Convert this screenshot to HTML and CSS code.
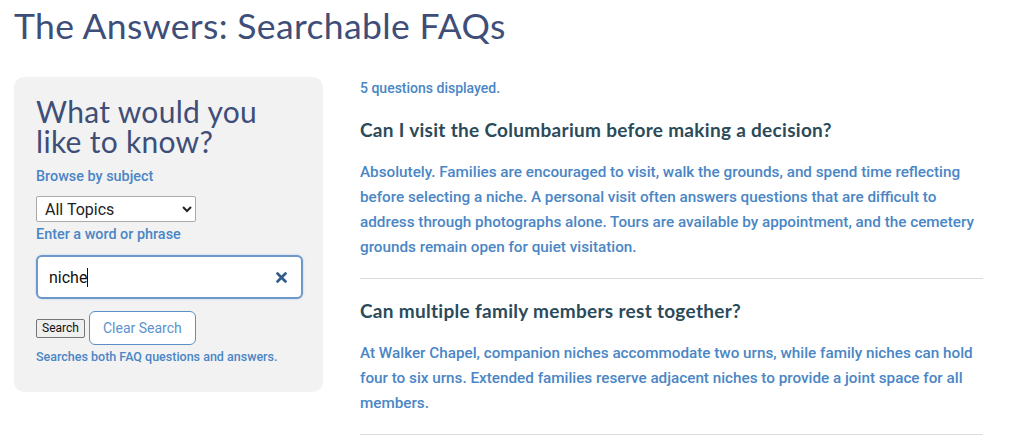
FILE: index.html
```html
<!DOCTYPE html>
<html>
<head>
<meta charset="utf-8">
<link rel="stylesheet" href="styles.css">
</head>
<body>
<h1 class="page-title">The Answers: Searchable FAQs</h1>
<div class="layout">
  <aside class="sidebar">
    <h2 class="side-title">What would you like to know?</h2>
    <label class="lbl">Browse by subject</label>
    <select class="topics"><option>All Topics</option></select>
    <label class="lbl lbl-word">Enter a word or phrase</label>
    <div class="search-box">
      <span class="search-text">niche</span><span class="caret"></span>
      <span class="clear-x">
        <svg width="11" height="11" viewBox="0 0 11 11"><path d="M1.5 1.5 L9.5 9.5 M9.5 1.5 L1.5 9.5" stroke="#2f5a8c" stroke-width="2.6" stroke-linecap="round"/></svg>
      </span>
    </div>
    <div class="btn-row">
      <button class="btn-search">Search</button>
      <button class="btn-clear">Clear Search</button>
    </div>
    <p class="hint">Searches both FAQ questions and answers.</p>
  </aside>
  <main class="faqs">
    <p class="count">5 questions displayed.</p>
    <section class="faq">
      <h3 class="q">Can I visit the Columbarium before making a decision?</h3>
      <p class="a">Absolutely. Families are encouraged to visit, walk the grounds, and spend time reflecting before selecting a niche. A personal visit often answers questions that are difficult to address through photographs alone. Tours are available by appointment, and the cemetery grounds remain open for quiet visitation.</p>
    </section>
    <section class="faq">
      <h3 class="q">Can multiple family members rest together?</h3>
      <p class="a">At Walker Chapel, companion niches accommodate two urns, while family niches can hold four to six urns. Extended families reserve adjacent niches to provide a joint space for all members.</p>
    </section>
  </main>
</div>
</body>
</html>
```
FILE: styles.css
```css
html, body { margin: 0; padding: 0; background: #fff; }
body { font-family: Roboto, "Liberation Sans", sans-serif; }
.page-title {
  margin: 0;
  padding: 6px 0 0 14px;
  font-family: Lato, "Open Sans", sans-serif;
  font-weight: 400;
  font-size: 35.5px;
  line-height: 40px;
  color: #3e4e78;
  letter-spacing: 0.35px;
}
.layout {
  display: flex;
  align-items: flex-start;
  padding: 31px 0 0 14px;
  gap: 37px;
}
.sidebar {
  width: 309px;
  flex-shrink: 0;
  box-sizing: border-box;
  background: #f2f2f3;
  border-radius: 10px;
  padding: 19px 21px 27px 22px;
  display: flex;
  flex-direction: column;
  align-items: flex-start;
}
.sidebar > * { flex-shrink: 0; }
.side-title {
  margin: 0;
  max-width: 240px;
  font-family: Lato, "Open Sans", sans-serif;
  font-weight: 400;
  font-size: 30px;
  line-height: 30px;
  color: #3e4e78;
  letter-spacing: 0.3px;
}
.lbl {
  font-weight: 500;
  font-size: 14.4px;
  line-height: 18px;
  color: #4a86c5;
  margin-top: 12px;
}
.topics {
  margin-top: 10px;
  width: 160px;
  height: 26px;
  font-family: Roboto, sans-serif;
  font-size: 16px;
  color: #222;
  border: 1px solid #aaa;
  background: #fff;
  border-radius: 2px;
  padding: 0 4px;
}
.lbl-word { margin-top: 4px; }
.search-box {
  margin-top: 11px;
  width: 267px;
  height: 44px;
  box-sizing: border-box;
  border: 2px solid #6d99c9;
  border-radius: 6px;
  background: #fff;
  display: flex;
  align-items: center;
  padding: 0 14px 0 11px;
  box-shadow: 0 0 2px rgba(74,134,197,0.4);
}
.search-text { font-size: 16px; color: #111; }
.caret { width: 1px; height: 19px; background: #111; margin-left: 0; }
.clear-x { margin-left: auto; display: flex; }
.btn-row {
  margin-top: 12px;
  display: flex;
  align-items: center;
  gap: 4px;
}
.btn-search {
  font-family: Roboto, sans-serif;
  font-size: 12px;
  height: 19px;
  padding: 0 5px;
  border: 1px solid #767676;
  background: #efefef;
  border-radius: 2px;
  color: #111;
}
.btn-clear {
  font-family: Roboto, sans-serif;
  font-size: 14px;
  height: 34px;
  width: 107px;
  background: #fff;
  border: 1px solid #5b8fc6;
  border-radius: 6px;
  color: #5b93cc;
}
.hint {
  margin: 4px 0 0;
  font-weight: 500;
  font-size: 12.5px;
  line-height: 16px;
  color: #4a86c5;
}
.faqs { width: 623px; }
.count {
  margin: 2px 0 0;
  font-weight: 500;
  font-size: 14px;
  line-height: 18px;
  color: #4a86c5;
}
.faq { border-bottom: 1px solid #dcdcdc; padding-bottom: 18px; }
.q {
  margin: 20px 0 0;
  font-family: Lato, "Open Sans", sans-serif;
  font-weight: 700;
  font-size: 19px;
  line-height: 26px;
  letter-spacing: 0.3px;
  color: #2b4a5a;
}
.faq + .faq .q { margin-top: 19px; }
.a {
  margin: 17px 0 0;
  font-weight: 500;
  font-size: 15.25px;
  line-height: 25px;
  color: #4a86c5;
}
```
